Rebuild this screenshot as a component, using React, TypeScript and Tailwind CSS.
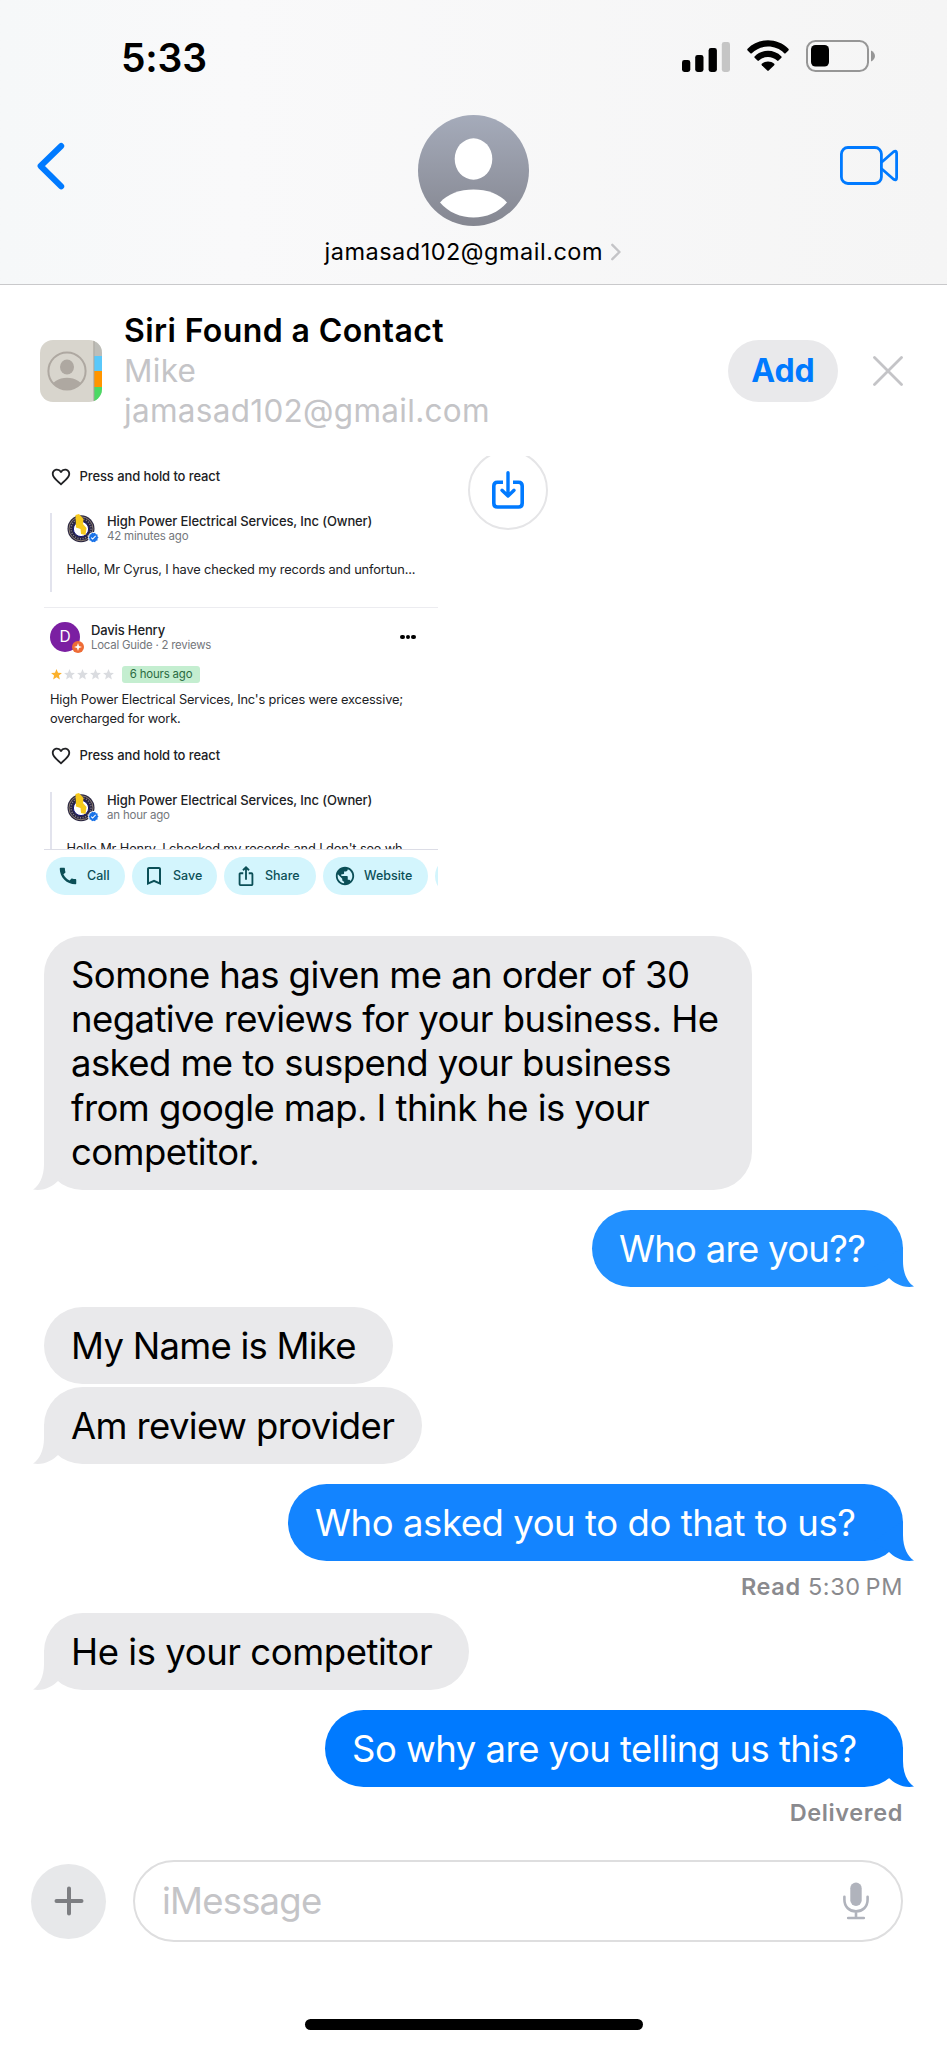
import React from "react";
import {
  MdCall,
  MdBookmarkBorder,
  MdIosShare,
  MdPublic,
  MdFavoriteBorder,
  MdStar,
  MdVerified,
} from "react-icons/md";

interface Message {
  text: string;
  from: "me" | "them";
  tail?: boolean;
  className: string;
  receipt?: React.ReactNode;
}

const messages: Message[] = [
  {
    text: "Somone has given me an order of 30\nnegative reviews for your business. He\nasked me to suspend your business\nfrom google map. I think he is your\ncompetitor.",
    from: "them",
    tail: true,
    className: "mt-[36px] w-[708px] tracking-[-0.57px]",
  },
  {
    text: "Who are you??",
    from: "me",
    tail: true,
    className: "mt-[20px] w-[311px] bg-[#2190ff] text-[#2190ff] tracking-[-0.72px]",
  },
  {
    text: "My Name is Mike",
    from: "them",
    className: "mt-[20px] w-[349px] tracking-[-0.75px]",
  },
  {
    text: "Am review provider",
    from: "them",
    tail: true,
    className: "mt-[2.5px] w-[378px] tracking-[-0.63px]",
  },
  {
    text: "Who asked you to do that to us?",
    from: "me",
    tail: true,
    className: "mt-[19.5px] w-[615px] bg-[#1384ff] text-[#1384ff] tracking-[-0.43px]",
    receipt: (
      <>
        <span className="font-semibold">Read</span> 5:30&#8239;PM
      </>
    ),
  },
  {
    text: "He is your competitor",
    from: "them",
    tail: true,
    className: "mt-[10px] w-[425px] tracking-[-0.45px]",
  },
  {
    text: "So why are you telling us this?",
    from: "me",
    tail: true,
    className: "mt-[20px] w-[578px] bg-[#007aff] text-[#007aff] tracking-[-0.53px]",
    receipt: <span className="font-semibold">Delivered</span>,
  },
];

const StatusBar = () => (
  <div className="flex h-[114px] items-center justify-between pl-[121px] pr-[71px]">
    <span className="text-[39px] font-semibold leading-none tracking-[-0.2px]">5:33</span>
    <div className="flex items-center">
      <svg width="48" height="32" viewBox="0 0 48 32">
        <rect x="0" y="19" width="8.3" height="12" rx="2.4" />
        <rect x="13.2" y="14" width="8.3" height="17" rx="2.4" />
        <rect x="26.6" y="7" width="8.3" height="24" rx="2.4" />
        <rect x="39.8" y="1" width="8.2" height="30" rx="2.4" fill="#c5c5c5" />
      </svg>
      <svg width="42" height="32" viewBox="0 0 42 32" className="-mt-[2px] ml-[17px]">
        <path d="M0.6 8.8 C11.5 -2.6 30.5 -2.6 41.4 8.8 Q42.2 9.6 41.4 10.4 L38.6 13.2 Q37.9 13.8 37.2 13.2 C28.5 4.4 13.5 4.4 4.8 13.2 Q4.1 13.8 3.4 13.2 L0.6 10.4 Q-0.2 9.6 0.6 8.8 Z" />
        <path d="M7.6 16.4 C15 9 27 9 34.4 16.4 Q35 17.1 34.4 17.8 L31.5 20.6 Q30.8 21.2 30.1 20.6 C25 15.8 17 15.8 11.9 20.6 Q11.2 21.2 10.5 20.6 L7.6 17.8 Q7 17.1 7.6 16.4 Z" />
        <path d="M14.8 23.8 C18.2 20.6 23.8 20.6 27.2 23.8 Q27.8 24.5 27.2 25.2 L21.7 30.6 Q21 31.2 20.3 30.6 L14.8 25.2 Q14.2 24.5 14.8 23.8 Z" />
      </svg>
      <svg width="70" height="32" viewBox="0 0 70 32" className="-mt-[2px] ml-[17px]">
        <rect x="1" y="1" width="61" height="30" rx="8.5" fill="none" stroke="#969696" strokeWidth="2" />
        <rect x="5" y="5" width="18" height="21.5" rx="4.5" />
        <path d="M65 10.5 C70.3 13 70.3 19 65 21.5 Z" fill="#969696" />
      </svg>
    </div>
  </div>
);

const Header = () => (
  <header className="h-[285px] border-b border-[#c9c9cb] bg-linear-to-r from-[#f6f8f9] via-[#f9f9fa] via-25% to-[#f5f5f5]">
    <StatusBar />
    <div className="grid grid-cols-[1fr_auto_1fr]">
      <button className="ml-[37px] mt-[28px] self-start justify-self-start">
        <svg width="28" height="48" viewBox="0 0 28 48" fill="none" stroke="#007aff" strokeWidth="6" strokeLinecap="round" strokeLinejoin="round">
          <path d="M24.2 4 L3.6 24 L24.2 44.4" />
        </svg>
      </button>
      <div className="flex flex-col items-center">
        <svg width="111" height="111" viewBox="0 0 111 111" className="mt-px">
          <defs>
            <linearGradient id="avatar" x1="0" y1="0" x2="0" y2="1">
              <stop offset="0" stopColor="#a5abba" />
              <stop offset="1" stopColor="#858791" />
            </linearGradient>
          </defs>
          <circle cx="55.5" cy="55.5" r="55.5" fill="url(#avatar)" />
          <ellipse cx="55.5" cy="44" rx="18.8" ry="20.7" fill="#fff" />
          <path d="M22 87.5 C36 70 75 70 89 87.5 C72 107.5 39 107.5 22 87.5 Z" fill="#fff" />
        </svg>
        <div className="mt-[11px] flex items-center gap-[8px] pr-[2px]">
          <span className="w-[278px] whitespace-nowrap text-[23.5px] leading-[30px] tracking-[0.5px]">
            jamasad102@gmail.com
          </span>
          <svg width="10" height="18" viewBox="0 0 10 18" fill="none" stroke="#c4c4c7" strokeWidth="2.4" strokeLinecap="round">
            <path d="M1.3 1.8 L8.4 9 L1.3 16.2" />
          </svg>
        </div>
      </div>
      <button className="mr-[49px] mt-[32px] self-start justify-self-end">
        <svg width="58" height="39" viewBox="0 0 58 39" fill="none" stroke="#007aff" strokeWidth="2.8" strokeLinejoin="round">
          <rect x="1.4" y="1.5" width="40" height="36" rx="6.5" />
          <path d="M41.6 16.2 L53.6 5.7 Q56.6 4 56.6 7.3 V31.7 Q56.6 35 53.6 33.3 L41.6 22.8" />
        </svg>
      </button>
    </div>
  </header>
);

const ContactsIcon = () => (
  <svg width="62" height="62" viewBox="0 0 62 62" className="shrink-0">
    <defs>
      <clipPath id="contacts">
        <rect width="62" height="62" rx="13" />
      </clipPath>
      <clipPath id="person">
        <circle cx="27" cy="31" r="18.5" />
      </clipPath>
    </defs>
    <g clipPath="url(#contacts)">
      <rect width="62" height="62" fill="#d8d5cd" />
      <rect x="54" width="8" height="16" fill="#bdbdb8" />
      <rect x="54" y="16" width="8" height="15" fill="#5ac8fa" />
      <rect x="54" y="31" width="8" height="16" fill="#ff9500" />
      <rect x="54" y="47" width="8" height="15" fill="#4cd964" />
      <rect x="53.4" width="1" height="62" fill="#a9a69e" />
    </g>
    <circle cx="27" cy="31" r="18.6" fill="none" stroke="#aea8a1" strokeWidth="2" />
    <g clipPath="url(#person)" fill="#aea8a1">
      <ellipse cx="27" cy="27" rx="7" ry="7.5" />
      <ellipse cx="27" cy="48" rx="15.5" ry="10.2" />
    </g>
  </svg>
);

const ContactSuggestion = () => (
  <section className="flex h-[171px] items-center pl-[40px] pr-[44px]">
    <ContactsIcon />
    <div className="ml-[22px] flex-1 whitespace-nowrap text-[31.5px] leading-[40px] tracking-[0.3px] text-[#c4c4c7]">
      <p className="text-[32px] font-semibold tracking-[0.4px] text-black">Siri Found a Contact</p>
      <p>Mike</p>
      <p>jamasad102@gmail.com</p>
    </div>
    <button className="h-[62px] w-[110px] rounded-full bg-[#e9e9eb] text-[32px] font-bold text-[#007aff]">
      Add
    </button>
    <svg width="30" height="30" viewBox="0 0 30 30" stroke="#c4c4c7" strokeWidth="2.8" strokeLinecap="round" className="ml-[35px]">
      <path d="M1.5 1.5 L28.5 28.5 M28.5 1.5 L1.5 28.5" />
    </svg>
  </section>
);

const ReactRow = ({ className }: { className: string }) => (
  <div className={`flex h-[18px] items-center ${className}`}>
    <MdFavoriteBorder size={22} className="shrink-0" />
    <span className="ml-[7.5px] text-[13px] font-medium tracking-[-0.1px]">
      Press and hold to react
    </span>
  </div>
);

const BusinessLogo = () => (
  <div className="relative h-[30px] w-[30px]">
    <svg width="28" height="29" viewBox="0 0 28 29">
      <circle cx="14" cy="14.8" r="13.5" fill="#2a2640" />
      <circle cx="14" cy="14.8" r="12" fill="none" stroke="#a3937f" strokeWidth="0.8" />
      <circle cx="14" cy="14.8" r="10" fill="none" stroke="#8d8496" strokeWidth="1.4" strokeDasharray="1 1.6" />
      <circle cx="14" cy="15" r="7.6" fill="#fff" stroke="#15157a" strokeWidth="1" />
      <path d="M8.5 1 L12 0 L16.5 5 L16 10 L19.5 14 L18.5 21 L14 20 L13.5 15 L9 13.5 Z" fill="#f6c91c" />
    </svg>
    <span className="absolute -right-[2px] bottom-[1px] rounded-full bg-white">
      <MdVerified size={11} color="#1a73e8" />
    </span>
  </div>
);

interface ReplyProps {
  time: string;
  text: string;
  className: string;
}

const OwnerReply = ({ time, text, className }: ReplyProps) => (
  <div className={`overflow-hidden border-l-2 border-[#e2e3ed] pl-[15px] pt-px ${className}`}>
    <div className="flex h-[30px]">
      <BusinessLogo />
      <div className="ml-[10px] whitespace-nowrap leading-[15px]">
        <p className="text-[13px] font-medium tracking-[-0.12px]">
          High Power Electrical Services, Inc (Owner)
        </p>
        <p className="text-[11.5px] tracking-[-0.2px] text-[#74777c]">{time}</p>
      </div>
    </div>
    <p className="-ml-[0.5px] mt-[17px] whitespace-nowrap text-[12.8px] leading-[18px] tracking-[-0.13px]">
      {text}
    </p>
  </div>
);

const chips = [
  { label: "Call", icon: <MdCall size={22} />, className: "w-[79px] pl-[11px] gap-[8px]" },
  { label: "Save", icon: <MdBookmarkBorder size={24} />, className: "w-[85px] pl-[10px] gap-[7px]" },
  { label: "Share", icon: <MdIosShare size={22} />, className: "w-[92px] pl-[11px] gap-[8px]" },
  { label: "Website", icon: <MdPublic size={22} />, className: "w-[105px] pl-[11px] gap-[8px]" },
  { label: "", icon: null, className: "w-[40px]" },
];

const ReviewAttachment = () => (
  <div className="h-[444px] w-[394px] shrink-0 overflow-hidden pt-[12px] text-[#202124]">
    <div className="pl-[6px]">
      <ReactRow className="" />
      <OwnerReply
        className="mt-[27px] h-[79px]"
        time="42 minutes ago"
        text="Hello, Mr Cyrus, I have checked my records and unfortun..."
      />
    </div>
    <div className="mt-[15px] h-px bg-[#ececf0]" />
    <div className="pl-[6px]">
      <div className="mt-[14px] flex h-[30px]">
        <div className="relative flex size-[30px] items-center justify-center rounded-full bg-[#7b1fa2] text-[15.5px] text-white">
          D
          <span className="absolute -bottom-[1px] -right-[4px] flex size-[12px] items-center justify-center rounded-full bg-[#ee6c36]">
            <svg width="8" height="8" viewBox="0 0 8 8">
              <path d="M4 0 L5 3 L8 4 L5 5 L4 8 L3 5 L0 4 L3 3 Z" fill="#fff" />
            </svg>
          </span>
        </div>
        <div className="ml-[11px] flex-1 pt-[0.5px] leading-[15px]">
          <p className="text-[13px] font-medium tracking-[-0.15px]">Davis Henry</p>
          <p className="text-[11.4px] tracking-[-0.22px] text-[#74777c]">Local Guide · 2 reviews</p>
        </div>
        <div className="mr-[22px] flex items-center gap-[1px]">
          <span className="size-[4.6px] rounded-full bg-black" />
          <span className="size-[4.6px] rounded-full bg-black" />
          <span className="size-[4.6px] rounded-full bg-black" />
        </div>
      </div>
      <div className="mt-[14px] flex h-[17px] items-center text-[#dadce0]">
        <MdStar size={13} className="text-[#fbb12c]" />
        <MdStar size={13} />
        <MdStar size={13} />
        <MdStar size={13} />
        <MdStar size={13} />
        <span className="ml-[7px] flex h-[17px] w-[78px] items-center justify-center rounded-[3px] bg-[#c4eed0] text-[11.4px] tracking-[-0.15px] text-[#2b6b42]">
          6 hours ago
        </span>
      </div>
      <p className="mt-[8px] whitespace-nowrap text-[12.8px] leading-[18.5px] tracking-[-0.16px]">
        High Power Electrical Services, Inc's prices were excessive;
        <br />
        overcharged for work.
      </p>
      <ReactRow className="mt-[19px]" />
      <OwnerReply
        className="mt-[27px] h-[57px]"
        time="an hour ago"
        text="Hello Mr Henry, I checked my records and I don't see wh"
      />
    </div>
    <div className="h-px bg-[#dcdde6]" />
    <div className="ml-[2px] mt-[7px] flex gap-[7px] overflow-hidden">
      {chips.map((chip, i) => (
        <span
          key={i}
          className={`flex h-[38px] shrink-0 items-center rounded-full bg-[#d3f5fd] text-[12.5px] font-medium text-[#0b4f57] ${chip.className}`}
        >
          {chip.icon}
          {chip.label}
        </span>
      ))}
    </div>
  </div>
);

const SaveButton = () => (
  <button className="-mt-[6px] ml-[30px] flex size-[80px] items-center justify-center rounded-full border-2 border-[#e5e5e7]">
    <svg width="32" height="38" viewBox="0 0 32 38" fill="none" stroke="#007aff" strokeWidth="3.6" strokeLinecap="round" strokeLinejoin="round">
      <path d="M11 11.2 H5.5 Q1.8 11.2 1.8 15 V32.2 Q1.8 36 5.5 36 H26.5 Q30.2 36 30.2 32.2 V15 Q30.2 11.2 26.5 11.2 H21" strokeLinecap="butt" />
      <path d="M16 1.8 V24.5 M10 19.3 L16 25 L22 19.3" strokeWidth="3.4" />
    </svg>
  </button>
);

const Bubble = ({ message }: { message: Message }) => {
  const mine = message.from === "me";
  return (
    <>
      <div
        className={`relative rounded-[38.5px] pb-[16px] pl-[27px] pt-[17px] ${mine ? "self-end" : "self-start bg-[#e9e9eb] text-[#e9e9eb]"} ${message.className}`}
      >
        {message.tail && (
          <svg
            width="40"
            height="40"
            viewBox="0 0 40 40"
            className={`absolute bottom-0 ${mine ? "-right-[11px] -scale-x-100" : "-left-[11px]"}`}
          >
            <path d="M11 0 V14 C11 27 6 36 0 39.5 C11 41.5 20 36 25 31 L40 20 Z" fill="currentColor" />
          </svg>
        )}
        <p
          className={`relative whitespace-pre text-[36.5px] leading-[44.2px] ${mine ? "text-white" : "text-black"}`}
        >
          {message.text}
        </p>
      </div>
      {message.receipt && (
        <p className="mb-px mt-[10px] h-[31px] self-end whitespace-nowrap text-[23.5px] leading-[31px] tracking-[0.6px] text-[#8a8a8e]">
          {message.receipt}
        </p>
      )}
    </>
  );
};

const Composer = () => (
  <div className="flex items-center pl-[31px] pr-[44px]">
    <button className="flex size-[75px] items-center justify-center rounded-full bg-[#e7e8ea]">
      <svg width="30" height="30" viewBox="0 0 30 30" stroke="#7d7e82" strokeWidth="4" strokeLinecap="round">
        <path d="M15 2.5 V27.5 M2.5 15 H27.5" />
      </svg>
    </button>
    <div className="ml-[27px] flex h-[82px] flex-1 items-center justify-between rounded-full border-2 border-[#dededf] pl-[27px] pr-[32px]">
      <span className="text-[36.5px] tracking-[-0.8px] text-[#c4c4c7]">iMessage</span>
      <svg width="26" height="38" viewBox="0 0 26 38" fill="none" stroke="#b0b3bc" strokeWidth="2.6" strokeLinecap="round">
        <rect x="7.3" y="0.5" width="11.4" height="23.5" rx="5.7" fill="#b0b3bc" stroke="none" />
        <path d="M1.4 14.8 V17.5 C1.4 25 6.5 29.4 13 29.4 S24.6 25 24.6 17.5 V14.8 M13 29.4 V36 M5.2 36 H20.8" />
      </svg>
    </div>
  </div>
);

export default function App() {
  return (
    <div className="flex h-[2048px] w-[947px] flex-col overflow-hidden bg-white font-['Inter',sans-serif] text-black">
      <Header />
      <ContactSuggestion />
      <main className="flex h-[1404px] flex-col overflow-hidden pl-[44px] pr-[44px]">
        <div className="flex items-start">
          <ReviewAttachment />
          <SaveButton />
        </div>
        {messages.map((message, i) => (
          <Bubble key={i} message={message} />
        ))}
      </main>
      <Composer />
      <div className="mx-auto mt-[77px] h-[11px] w-[338px] rounded-full bg-black" />
    </div>
  );
}
